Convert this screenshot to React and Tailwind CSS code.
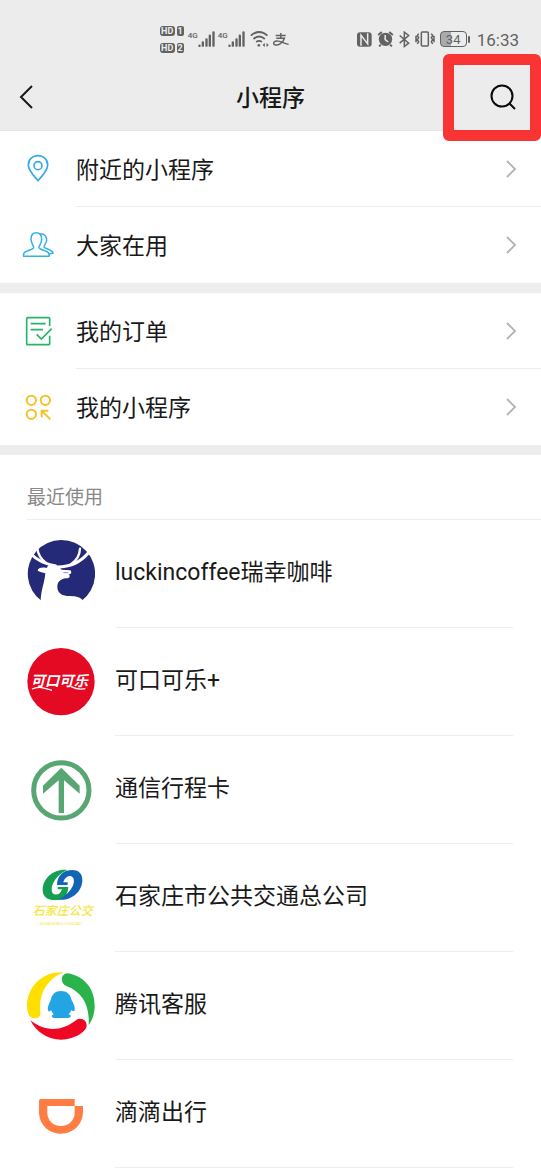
import React from "react";

const PinIcon = () => (
    <svg viewBox="66 39 96 96" className="size-8" fill="none" stroke="#35a9e6" strokeWidth="5">
        <path d="M114 122 C106 112 85 93 85 75 C85 58 98 47 114 47 C130 47 143 58 143 75 C143 93 122 112 114 122 Z" strokeLinejoin="round" />
        <circle cx="114" cy="77" r="12" />
    </svg>
);

const PeopleIcon = () => (
    <svg viewBox="66 267 96 96" className="size-8" fill="none" stroke="#35b0ec" strokeWidth="4.5" strokeLinejoin="round" strokeLinecap="round">
        <path d="M71 349 C69 341 72 337 79 334 C90 329 100 328 101 323 C102 317 93 312 93 297 C93 285 98 278 109 278 C120 278 125 285 125 297 C125 312 116 317 117 323 C118 328 128 329 139 334 C146 337 149 341 147 349 Z" />
        <path d="M120 283 C132 280 140 288 140 299 C140 311 131 316 132 321 C133 326 159 328 159 340 L148 341" />
    </svg>
);

const OrderIcon = () => (
    <svg viewBox="66 75 96 96" className="size-8" fill="none" stroke="#25b569" strokeWidth="5" strokeLinejoin="round">
        <path d="M149 108 V86 Q149 83 146 83 H83 Q80 83 80 86 V161 Q80 164 83 164 H146 Q149 164 149 161 V137" />
        <path d="M92 101 H137 M92 119 H129" />
        <path d="M110 133 L124 147 L155 116" strokeLinejoin="miter" />
    </svg>
);

const AppsIcon = () => (
    <svg viewBox="66 303 96 96" className="size-8" fill="none" stroke="#f3c32c" strokeWidth="6">
        <circle cx="94" cy="331" r="14" />
        <circle cx="136" cy="331" r="14" />
        <circle cx="94" cy="373" r="14" />
        <path d="M125 382 V362 H145 M125 362 L151 388" />
    </svg>
);

const LuckinLogo = () => (
    <svg viewBox="36 30 204 204" className="size-[68px]">
        <path d="M80 213 A101 101 0 1 1 200 212 C190 199 165 200 150 197 Z" fill="#242a78" />
        <path d="M77 216 C77 182 89 158 91 130 C83 127 74 126 68 122 C69 114 80 111 95 114 L100 106 C112 100 126 102 140 119 L166 121 C172 128 168 134 160 133 C168 138 164 146 153 145 C136 147 127 156 127 170 C127 192 145 197 160 198 C178 198 193 200 202 209 L202 216 Z" fill="#fff" />
        <g fill="none" stroke="#fff" strokeLinecap="round">
            <path d="M122 108 C92 102 67 92 48 72" strokeWidth="9" />
            <path d="M92 98 C77 86 69 73 67 56" strokeWidth="7" />
            <path d="M128 111 C166 111 197 96 219 70" strokeWidth="9" />
            <path d="M168 103 C186 91 194 76 195 56" strokeWidth="7" />
        </g>
        <path d="M145 128 H160" stroke="#242a78" strokeWidth="1.5" />
    </svg>
);

const CokeLogo = () => (
    <svg viewBox="36 24 204 204" className="size-[68px]">
        <circle cx="138" cy="125" r="101" fill="#e50a24" />
        <text x="133" y="138" textAnchor="middle" fontSize="43" fontWeight="700" fontStyle="italic" fill="#fff" className="font-['Noto_Sans_CJK_SC',sans-serif]">可口可乐</text>
        <path d="M51 147 C75 136 88 146 111 151 M168 140 C184 148 197 149 211 146" fill="none" stroke="#fff" strokeWidth="4" />
    </svg>
);

const TravelLogo = () => (
    <svg viewBox="36 33 204 204" className="size-[68px]">
        <circle cx="139" cy="136" r="83" fill="none" stroke="#58a773" strokeWidth="15" />
        <path d="M139 68 L194 122 V146 L147 106 V204 H131 V106 L84 146 V122 Z" fill="#58a773" />
    </svg>
);

const BusLogo = () => (
    <svg viewBox="36 27 204 204" className="size-[68px]">
        <path d="M157 45 C117 40 83 70 83 105 C83 130 106 139 133 134 C149 130 159 116 160 96 H128 V103 H141 C137 116 127 121 118 118 C101 111 111 65 157 45 Z" fill="#15a051" />
        <path d="M129 134 C170 139 202 109 202 75 C202 49 182 41 156 47 C137 52 126 70 126 90 H158 V82 H145 C149 68 160 61 169 64 C187 73 174 113 129 134 Z" fill="#1265b5" />
        <text x="143" y="181" textAnchor="middle" fontSize="36" fontWeight="500" fontStyle="italic" fill="#f4e63b" className="font-['Noto_Sans_CJK_SC',sans-serif]">石家庄公交</text>
        <text x="137" y="209" textAnchor="middle" fontSize="10" fill="#f4e63b" className="font-['Liberation_Sans',sans-serif]">SHIJIAZHUANG GONGJIAO</text>
    </svg>
);

const TencentLogo = () => (
    <svg viewBox="36 36 204 204" className="size-[68px]">
        <path d="M146 37 C84 31 36 81 36 136 C36 163 45 175 59 175 C73 175 78 166 76 152 C71 102 96 56 146 37 Z" fill="#ffdf00" />
        <path d="M157 40 C209 48 239 87 239 137 C239 158 233 179 221 195 C224 137 204 97 154 78 C134 69 138 41 157 40 Z" fill="#29b34a" />
        <path d="M46 181 C92 218 141 212 181 182 C197 169 216 180 215 198 C213 216 178 238 139 239 C97 239 64 216 46 181 Z" fill="#ef0823" />
        <path d="M138 93 C155 93 167 103 170 121 C177 133 182 145 178 153 C175 156 171 151 168 151 C167 157 164 160 160 163 C170 165 170 174 157 174 H121 C108 174 108 165 117 163 C113 160 110 156 109 151 C105 153 103 156 100 153 C96 145 101 133 107 121 C110 103 121 93 138 93 Z" fill="#24a5e3" />
    </svg>
);

const DidiLogo = () => (
    <svg viewBox="36 0 204 204" className="size-[68px]">
        <path d="M77 57 H179 V78 H204 V94 C204 134 175 161 138 161 C101 161 72 133 72 95 V62 Q72 57 77 57 Z M97 78 V98 C97 121 115 138 138 138 C161 138 179 121 179 98 V78 Z" fill="#ff7d42" fillRule="evenodd" />
    </svg>
);

const Chevron = () => (
    <svg viewBox="0 0 12 18" className="w-3 h-[18px] shrink-0" fill="none" stroke="#b2b2b2" strokeWidth="1.8">
        <path d="M2 1 L10 9 L2 17" />
    </svg>
);

const Signal = () => (
    <div className="flex items-start">
        <span className="w-2 text-[8px] leading-[9px] font-medium flex justify-end">4G</span>
        <svg viewBox="142 48 50 48" className="w-[17px] h-4" fill="none" stroke="#626262" strokeWidth="7" strokeLinecap="round">
            <path d="M146 92 V93 M156 82 V92 M167 73 V92 M177 62 V92 M188 52 V92" />
        </svg>
    </div>
);

const HdBadge = ({ sim }) => (
    <div className="flex gap-0.5 text-[9px] leading-[10px] font-bold text-[#ececec] text-center">
        <span className="w-[15px] h-[10px] rounded-[3px] bg-[#626262]">HD</span>
        <span className="w-[7px] h-[10px] rounded-[2px] bg-[#626262]">{sim}</span>
    </div>
);

const StatusBar = () => (
    <div className="h-16 pt-[14px] pr-[22px] flex items-center justify-end gap-[68px] text-[#626262] font-[Roboto,sans-serif]">
        <div className="flex items-center">
            <div className="flex flex-col gap-[7px] mr-1.5">
                <HdBadge sim="1" />
                <HdBadge sim="2" />
            </div>
            <div className="flex gap-[5px] mr-[5px]">
                <Signal />
                <Signal />
            </div>
            <svg viewBox="297 48 56 48" className="w-[19px] h-4 mr-1" fill="none" stroke="#626262" strokeWidth="5.5">
                <path d="M299 62 Q324 40 349 62 M307 72 Q324 57 341 72 M315 81 Q324 74 332 81" />
                <circle cx="323" cy="91" r="4" fill="#626262" stroke="none" />
                <path d="M341 84 L334 90 L341 96 Z M346 84 L353 90 L346 96 Z" fill="#626262" stroke="none" />
            </svg>
            <svg viewBox="366 53 49 40" className="w-4 h-[13px]" fill="none" stroke="#626262" strokeWidth="4.5">
                <path d="M374 61 H405 M390 53 V69 M376 69 H401 C396 86 380 92 371 89 C363 84 371 76 382 78 C394 80 403 86 414 88" />
            </svg>
        </div>
        <div className="flex items-center">
            <svg viewBox="19 51 45 44" className="w-[15px] h-[15px] mr-[5px]">
                <rect x="19" y="51" width="44" height="44" rx="9" fill="#626262" />
                <path d="M31 92 V60 L51 86 V54" fill="none" stroke="#ececec" strokeWidth="4.5" />
            </svg>
            <svg viewBox="80 49 50 48" className="w-[17px] h-4 mr-[5px]">
                <circle cx="105" cy="74" r="20" fill="#626262" />
                <path d="M83 61 L94 52 M116 52 L127 61 M91 90 L86 95 M119 90 L124 95" stroke="#626262" strokeWidth="6" />
                <path d="M104 61 V75 L113 82" fill="none" stroke="#ececec" strokeWidth="4.5" />
            </svg>
            <svg viewBox="146 48 33 50" className="w-[11px] h-[17px] mr-[5px]" fill="none" stroke="#626262" strokeWidth="4.5">
                <path d="M148 61 L175 84 L162 94 V51 L175 61 L148 84" />
            </svg>
            <svg viewBox="194 48 60 48" className="w-5 h-4 mr-[5px]" fill="none" stroke="#626262" strokeWidth="4.5">
                <rect x="213" y="51" width="21" height="42" rx="3" />
                <path d="M205 56 L201 62 L205 68 L201 74 L205 80 L201 87 M197 62 V82 M243 56 L247 62 L243 68 L247 74 L243 80 L247 87 M251 62 V82" />
            </svg>
            <div className="flex items-center mr-[7px]">
                <div className="w-[27px] h-4 rounded border-[1.5px] border-[#626262] bg-linear-to-r from-[#aaaaaa] from-40% to-transparent to-40% text-[13px] leading-[15px] text-center">34</div>
                <span className="ml-px w-[2px] h-[7px] rounded-xs bg-[#626262]"></span>
            </div>
            <time className="pt-0.5 text-[17px] leading-5">16:33</time>
        </div>
    </div>
);

const Header = () => (
    <header className="relative bg-[#ececec] border-b border-[#e6e6e6]">
        <StatusBar />
        <div className="h-[66px] pl-[18px] pr-6 flex items-center justify-between">
            <button type="button" aria-label="返回" className="w-[38px]">
                <svg viewBox="0 0 16 24" className="w-4 h-6" fill="none" stroke="#191919" strokeWidth="2">
                    <path d="M14 1 L3 12 L14 23" />
                </svg>
            </button>
            <h1 className="pt-1 text-[23px] leading-8 font-medium">小程序</h1>
            <button type="button" aria-label="搜索" className="w-8 flex justify-end">
                <svg viewBox="0 0 28 28" className="size-7" fill="none" stroke="#0a0a0a" strokeWidth="2">
                    <circle cx="13" cy="13" r="10.5" />
                    <path d="M20.5 20.5 L26 26" />
                </svg>
            </button>
        </div>
        <div className="absolute right-0 top-[54px] w-[98px] h-[87px] border-[11px] border-[#f83434] rounded-md pointer-events-none"></div>
    </header>
);

const MenuRow = ({ icon: Icon, label, last }) => (
    <a href="#" className="flex items-center pl-[22px]">
        <Icon />
        <span className={`ml-[22px] h-[76px] flex-1 flex items-center justify-between pr-6 border-b ${last ? "border-transparent" : "border-[#ededed]"}`}>
            <span className="pt-1 text-[23px] leading-8">{label}</span>
            <Chevron />
        </span>
    </a>
);

const recent = [
    { name: "luckincoffee瑞幸咖啡", logo: LuckinLogo },
    { name: "可口可乐+", logo: CokeLogo },
    { name: "通信行程卡", logo: TravelLogo },
    { name: "石家庄市公共交通总公司", logo: BusLogo },
    { name: "腾讯客服", logo: TencentLogo },
    { name: "滴滴出行", logo: DidiLogo },
];

const App = () => {
    return (
        <div className="min-h-screen bg-white text-[#191919] font-[Roboto,'Noto_Sans_CJK_SC',sans-serif]">
            <Header />
            <main>
                <nav>
                    <MenuRow icon={PinIcon} label="附近的小程序" />
                    <MenuRow icon={PeopleIcon} label="大家在用" last />
                    <div className="h-2.5 bg-[#ededed]"></div>
                    <MenuRow icon={OrderIcon} label="我的订单" />
                    <MenuRow icon={AppsIcon} label="我的小程序" last />
                    <div className="h-2.5 bg-[#ededed]"></div>
                </nav>
                <section>
                    <h2 className="ml-[27px] pt-[29px] pb-[7px] text-[19px] leading-7 text-[#888888] border-b border-[#ededed]">最近使用</h2>
                    <ul>
                        {recent.map(({ name, logo: Logo }) => (
                            <li key={name}>
                                <a href="#" className="flex items-center pl-[27px] pr-7">
                                    <Logo />
                                    <span className="ml-5 h-[108px] pb-0.5 flex-1 flex items-center border-b border-[#ededed] text-[23px] leading-8">{name}</span>
                                </a>
                            </li>
                        ))}
                    </ul>
                </section>
            </main>
        </div>
    )
}

export default App
